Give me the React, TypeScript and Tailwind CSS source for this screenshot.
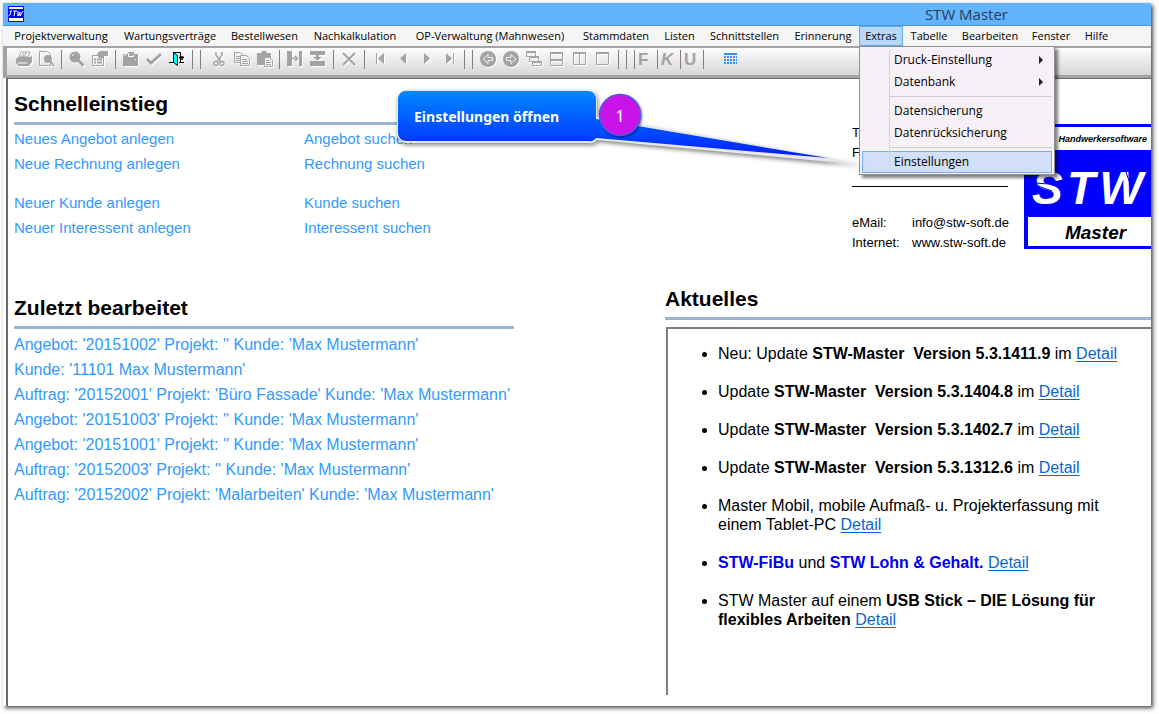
import type { ReactNode } from "react";

interface ToolGroup {
  className: string;
  tools: { label: string; icon: ReactNode }[];
}

const menuItems = [
  { label: "Projektverwaltung", width: "w-[110px]" },
  { label: "Wartungsverträge", width: "w-[108px]" },
  { label: "Bestellwesen", width: "w-[81px]" },
  { label: "Nachkalkulation", width: "w-[100px]" },
  { label: "OP-Verwaltung (Mahnwesen)", width: "w-[170px]" },
  { label: "Stammdaten", width: "w-[82px]" },
  { label: "Listen", width: "w-[45px]" },
  { label: "Schnittstellen", width: "w-[85px]" },
  { label: "Erinnerung", width: "w-[72px]" },
  { label: "Extras", width: "w-[44px]" },
  { label: "Tabelle", width: "w-[52px]" },
  { label: "Bearbeiten", width: "w-[70px]" },
  { label: "Fenster", width: "w-[52px]" },
  { label: "Hilfe", width: "w-[39px]" },
];

const recent = [
  "Angebot: '20151002' Projekt: '' Kunde: 'Max Mustermann'",
  "Kunde: '11101 Max Mustermann'",
  "Auftrag: '20152001' Projekt: 'Büro Fassade' Kunde: 'Max Mustermann'",
  "Angebot: '20151003' Projekt: '' Kunde: 'Max Mustermann'",
  "Angebot: '20151001' Projekt: '' Kunde: 'Max Mustermann'",
  "Auftrag: '20152003' Projekt: '' Kunde: 'Max Mustermann'",
  "Auftrag: '20152002' Projekt: 'Malarbeiten' Kunde: 'Max Mustermann'",
];

const quickLinks = [
  [
    ["Neues Angebot anlegen", "Angebot suchen"],
    ["Neue Rechnung anlegen", "Rechnung suchen"],
  ],
  [
    ["Neuer Kunde anlegen", "Kunde suchen"],
    ["Neuer Interessent anlegen", "Interessent suchen"],
  ],
];

const toolGroups: ToolGroup[] = [
  {
    className: "w-[51px] justify-center",
    tools: [
      {
        label: "Drucken",
        icon: (
          <>
            <path d="M5 1h9l-2 5H3z" fill="#fff" stroke="currentColor" />
            <path d="M6 3h5M5 5h5" stroke="currentColor" />
            <path d="M2 6h12l2-1v6l-3 4H3l-3-3V8z" fill="currentColor" />
            <path d="M2 12h9" stroke="#fff" />
          </>
        ),
      },
      {
        label: "Seitenansicht",
        icon: (
          <>
            <path d="M.5.5h8l3 3v11H.5z" fill="none" stroke="currentColor" />
            <circle cx="9" cy="8" r="4" fill="currentColor" />
            <path d="M11 10l4 5" stroke="currentColor" strokeWidth="2" />
          </>
        ),
      },
    ],
  },
  {
    className: "w-[54px] justify-center",
    tools: [
      {
        label: "Suchen",
        icon: (
          <>
            <circle cx="6" cy="6" r="5.5" fill="currentColor" />
            <path d="M3 5l2-2" stroke="#fff" />
            <path d="M9 9l5.500 5.500" stroke="currentColor" strokeWidth="3" />
          </>
        ),
      },
      {
        label: "Eigenschaften",
        icon: (
          <>
            <path d="M.5 4.500h11v10H.5z" fill="none" stroke="currentColor" />
            <path d="M5 3l3-3h8v5h-4l-2 3-4-2z" fill="currentColor" />
            <path d="M2 8.500h2M5 8.500h5M2 11.500h2M5 11.500h5" stroke="currentColor" strokeWidth="2" />
          </>
        ),
      },
    ],
  },
  {
    className: "w-[77px] justify-center",
    tools: [
      {
        label: "Speichern",
        icon: (
          <>
            <path d="M0 3h5V1h6v2h4v12H0z" fill="currentColor" />
            <path d="M5.500 2v3.500h5V4" fill="none" stroke="#fff" />
            <path d="M12.500 8v1M1 4h2" stroke="#fff" />
          </>
        ),
      },
      {
        label: "Übernehmen",
        icon: <path d="M1 8l4 4 10-9" fill="none" stroke="currentColor" strokeWidth="3" />,
      },
      {
        label: "Beenden",
        icon: (
          <>
            <path d="M4.500 11V1.500h7V11M0 11.500h4M10 11.500h5" fill="none" stroke="#000" />
            <path d="M4.500 1.500l4 3v10l-4-3z" fill="#00ffff" stroke="#000" />
            <path d="M10 6.500h5M13 5v4" stroke="#000" strokeWidth="1.500" />
          </>
        ),
      },
    ],
  },
  { className: "w-2", tools: [] },
  {
    className: "w-[79px] justify-center pl-1",
    tools: [
      {
        label: "Ausschneiden",
        icon: (
          <g fill="none" stroke="currentColor">
            <path d="M5 1v3l5 7M11 1v3l-5 7" strokeWidth="1.500" />
            <circle cx="5" cy="12.500" r="2" strokeWidth="1.500" />
            <circle cx="11" cy="12.500" r="2" strokeWidth="1.500" />
          </g>
        ),
      },
      {
        label: "Kopieren",
        icon: (
          <g fill="#f4f2f4" stroke="currentColor">
            <path d="M.5 1.500h6l3 3v7h-9z" />
            <path d="M2 5.500h4M2 7.500h4M2 9.500h4" />
            <path d="M6.500 4.500h6l3 3v7h-9z" />
            <path d="M8 8.500h5M8 10.500h6M8 12.500h6" />
          </g>
        ),
      },
      {
        label: "Einfügen",
        icon: (
          <>
            <path d="M0 2h4l1-2h4l1 2h4v12H0z" fill="currentColor" />
            <path d="M7.500 6.500h5l3 3v6h-8z" fill="#f4f2f4" stroke="currentColor" />
            <path d="M9 9.500h3M9 11.500h5M9 13.500h5" stroke="currentColor" />
          </>
        ),
      },
    ],
  },
  {
    className: "w-[54px] justify-center",
    tools: [
      {
        label: "Spalte einfügen",
        icon: (
          <>
            <path d="M0 0h5v15H0zM12 0h3v15h-3z" fill="currentColor" />
            <path d="M5 7.500h5M8 5l2.500 2.500L8 10" fill="none" stroke="currentColor" strokeWidth="1.500" />
          </>
        ),
      },
      {
        label: "Zeile einfügen",
        icon: (
          <path d="M0 0h15v4H9v2h3L7.500 9.500 3 6h3V4H0zM0 10h15v5H0z" fill="currentColor" />
        ),
      },
    ],
  },
  {
    className: "w-[31px] justify-center",
    tools: [
      {
        label: "Löschen",
        icon: <path d="M2 2l12 12M14 2L2 14" stroke="currentColor" strokeWidth="2" />,
      },
    ],
  },
  {
    className: "w-[100px] justify-center",
    tools: [
      { label: "Erster", icon: <path d="M4 2h1v11H4zM12 2v11L6 7.500z" fill="currentColor" /> },
      { label: "Vorheriger", icon: <path d="M11 2v11L5 7.500z" fill="currentColor" /> },
      { label: "Nächster", icon: <path d="M6 2v11l6-5.500z" fill="currentColor" /> },
      { label: "Letzter", icon: <path d="M12 2h1v11h-1zM5 2v11l6-5.500z" fill="currentColor" /> },
    ],
  },
  { className: "w-2", tools: [] },
  {
    className: "w-[146px] justify-center",
    tools: [
      {
        label: "Zurück",
        icon: (
          <>
            <circle cx="8" cy="8" r="8" fill="currentColor" />
            <path
              d="M3 8l5-4.500v3h4.500v3H8v3z"
              fill="currentColor"
              stroke="#f4f2f4"
              strokeWidth="1"
            />
          </>
        ),
      },
      {
        label: "Vor",
        icon: (
          <>
            <circle cx="8" cy="8" r="8" fill="currentColor" />
            <path
              d="M13 8L8 3.500v3H3.500v3H8v3z"
              fill="currentColor"
              stroke="#f4f2f4"
              strokeWidth="1"
            />
          </>
        ),
      },
      {
        label: "Überlappend",
        icon: (
          <g fill="#f4f2f4" stroke="currentColor">
            <path d="M.5 1.500h9v4h-9z" />
            <path d="M0 1h10" strokeWidth="2" />
            <path d="M3.500 6.500h9v4h-9z" />
            <path d="M3 6h10" strokeWidth="2" />
            <path d="M6.500 11.500h9v3h-9z" />
            <path d="M6 11h10" strokeWidth="2" />
          </g>
        ),
      },
      {
        label: "Untereinander",
        icon: (
          <g fill="none" stroke="currentColor">
            <path d="M1.500 1.500h12v13h-12z" />
            <path d="M1 2h13M1 9h13" strokeWidth="2" />
          </g>
        ),
      },
      {
        label: "Nebeneinander",
        icon: (
          <g fill="none" stroke="currentColor">
            <path d="M1.500 1.500h12v12h-12zM7.500 2v12" />
            <path d="M1 2h13" strokeWidth="2" />
          </g>
        ),
      },
      {
        label: "Vollbild",
        icon: (
          <g fill="none" stroke="currentColor">
            <path d="M1.500 1.500h12v12h-12z" />
            <path d="M1 2h13" strokeWidth="2" />
          </g>
        ),
      },
    ],
  },
  { className: "w-2", tools: [] },
  { className: "w-2", tools: [] },
];

function Toolbar() {
  return (
    <div className="flex h-[32px] items-start border-t-2 border-b-[3px] border-l-[4px] border-[#a5a3a5] bg-linear-to-b from-[#fefdfe] to-[#d8d6d8] pt-[2px] pl-1 text-[#a5a2a5]">
      {toolGroups.map((group, i) => (
        <div
          key={i}
          className={`flex h-[19px] shrink-0 items-center border-r border-[#807e80] ${group.className}`}
        >
          {group.tools.map((tool) => (
            <button
              key={tool.label}
              aria-label={tool.label}
              className="flex w-[23px] shrink-0 items-center justify-center"
            >
              <svg
                width="17"
                height="17"
                viewBox="0 0 17 17"
                className="drop-shadow-[1px_1px_0_#fff]"
              >
                {tool.icon}
              </svg>
            </button>
          ))}
        </div>
      ))}
      {/* Text format */}
      <div className="flex h-[19px] font-['Liberation_Sans'] text-[17px] leading-[17px] font-bold">
        <button aria-label="Fett" className="w-[23px] border-r border-[#807e80] pl-[3px] text-left">
          F
        </button>
        <button aria-label="Kursiv" className="w-[23px] border-r border-[#807e80] pl-[3px] text-left italic">
          K
        </button>
        <button aria-label="Unterstrichen" className="w-[23px] border-r border-[#807e80] pl-[3px] text-left">
          U
        </button>
      </div>
      <button aria-label="Tabelle" className="ml-5 pt-[3px]">
        <svg width="14" height="14" viewBox="0 0 14 14">
          <path d="M0 0h13v2H0z" fill="#3b8cf5" />
          <path
            d="M0 4h13M0 7h13M0 10h13"
            stroke="#3b8cf5"
            strokeWidth="2"
            strokeDasharray="2 1"
          />
        </svg>
      </button>
    </div>
  );
}

function DropdownItem({ label, submenu }: { label: string; submenu?: boolean }) {
  return (
    <button className="flex h-[22px] w-full items-center justify-between pr-[9px] pl-8 text-left">
      {label}
      {submenu && (
        <svg width="4" height="8" viewBox="0 0 4 8">
          <path d="M0 0l4 4-4 4z" fill="#222" />
        </svg>
      )}
    </button>
  );
}

function ExtrasMenu() {
  return (
    <div className="absolute top-full left-0 z-20 w-[196px] border border-[#8f8f8f] bg-[#f6f1f6] p-[2px] pb-px text-[12px] shadow-[3px_3px_3px_rgba(0,0,0,0.5)]">
      <div className="absolute top-[3px] bottom-[3px] left-[29px] w-px bg-[#d5d3d5]" />
      <DropdownItem label="Druck-Einstellung" submenu />
      <DropdownItem label="Datenbank" submenu />
      <hr className="my-[3px] ml-[28px] border-[#d0ced0]" />
      <DropdownItem label="Datensicherung" />
      <DropdownItem label="Datenrücksicherung" />
      <hr className="my-[3px] ml-[28px] border-[#d0ced0]" />
      <div className="bg-[#66aaff]/25 outline outline-[#78aee5] -outline-offset-1">
        <DropdownItem label="Einstellungen" />
      </div>
    </div>
  );
}

function MenuBar() {
  return (
    <nav className="flex h-[20px] bg-[#f5f5f5] pl-[3px] font-['Open_Sans',sans-serif] text-[11px] text-black">
      {menuItems.map((item) => {
        const open = item.label === "Extras";
        return (
          <div
            key={item.label}
            className={`relative shrink-0 ${item.width} ${
              open ? "bg-[#b8d8fb] outline outline-[#66a7e8] -outline-offset-1" : ""
            }`}
          >
            <button className="flex h-full w-full items-center justify-center whitespace-nowrap">
              {item.label}
            </button>
            {open && <ExtrasMenu />}
          </div>
        );
      })}
    </nav>
  );
}

function Heading({ children }: { children: ReactNode }) {
  return (
    <h2 className="border-b-[3px] border-[#9ab4d6] pb-[6px] text-[21px] leading-[24px] font-bold">
      {children}
    </h2>
  );
}

function Logo() {
  return (
    <div className="mt-[45px] w-[127px] shrink-0 self-start border-y-[3px] border-l-4 border-[#0000ff] bg-white font-bold italic">
      <div className="-ml-1 h-[23px] pr-1 text-right text-[9px] leading-[24px]">
        Handwerkersoftware
      </div>
      <div className="relative flex h-[67px] items-center justify-between bg-[#0000ff] pt-2 pr-2 pl-1 text-[46px] leading-[46px] text-white">
        <span>S</span>
        <span>T</span>
        <span>W</span>
        {/* Ribbon folds */}
        <svg
          className="absolute inset-0"
          width="123"
          height="67"
          viewBox="0 0 123 67"
          fill="none"
          stroke="#0000ff"
        >
          <path d="M7 33l14 1M10 36l14 5M83 22l4 12M98 22l4 12" />
        </svg>
      </div>
      <div className="h-[29px] pl-3 text-center text-[19px] leading-[32px]">Master</div>
    </div>
  );
}

function Detail() {
  return (
    <a href="#detail" className="text-[#0a66d0] underline underline-offset-2">
      Detail
    </a>
  );
}

function Update({ prefix, version }: { prefix: string; version: string }) {
  return (
    <li>
      {prefix} <b>STW-Master&nbsp; Version {version}</b> im <Detail />
    </li>
  );
}

function Callout() {
  return (
    <div className="pointer-events-none absolute top-[86px] left-[392px] z-30 h-[92px] w-[490px]">
      <svg width="490" height="92" viewBox="0 0 490 92">
        <defs>
          <linearGradient id="box" x1="0" y1="5" x2="0" y2="72" gradientUnits="userSpaceOnUse">
            <stop offset="0" stopColor="#0088ff" />
            <stop offset="0.7" stopColor="#0040ff" />
            <stop offset="1" stopColor="#0018ff" />
          </linearGradient>
          <linearGradient id="edge" x1="430" y1="0" x2="482" y2="0" gradientUnits="userSpaceOnUse">
            <stop offset="0" stopColor="#e8e8ea" />
            <stop offset="1" stopColor="#e8e8ea" stopOpacity="0" />
          </linearGradient>
        </defs>
        <g className="drop-shadow-[1px_2px_2px_rgba(0,0,0,0.5)]">
          <path
            d="M14 4h182a9 9 0 0 1 9 9v18l277 49L205 54a9 9 0 0 1-9 3H14a9 9 0 0 1-9-9V13a9 9 0 0 1 9-9z"
            fill="url(#edge)"
          />
        </g>
        <path
          d="M14 5h182a8 8 0 0 1 8 8v20l232 39L204 52a8 8 0 0 1-8 3H14a8 8 0 0 1-8-8V13a8 8 0 0 1 8-8z"
          fill="url(#box)"
        />
        <g className="drop-shadow-[1px_1px_1px_rgba(0,0,0,0.5)]">
          <circle cx="228" cy="29" r="20.500" fill="#c913e8" stroke="#4a5be0" strokeWidth="1.500" />
        </g>
      </svg>
      <div className="absolute top-[5px] left-[6px] flex h-[50px] w-[242px] items-center font-['Noto_Sans',sans-serif] text-white">
        <span className="w-[202px] pl-4 text-[14px] font-bold">Einstellungen öffnen</span>
        <span className="w-10 text-center text-[16px]">1</span>
      </div>
    </div>
  );
}

export default function App() {
  return (
    <div className="relative flex min-h-screen flex-col bg-[#fdfdfd] pt-[3px] pr-2 pb-2 pl-[3px] font-['Liberation_Sans',sans-serif] text-black">
      <div className="flex flex-1 flex-col bg-white shadow-[2px_2px_4px_rgba(0,0,0,0.7)]">
        {/* Title bar */}
        <header className="flex h-[23px] items-center border-b border-[#4a99e6] bg-[#63b3ff] pl-[5px]">
          <svg width="16" height="16" viewBox="0 0 16 16">
            <path d="M0 0h16v16H0z" fill="#0000ff" />
            <path d="M1 1h14v2H1zM1 12h14v3H1z" fill="#fff" />
            <path
              d="M4 5H2l1 2-2 3M5 5h4M7 5l-1 5M10 5v5l2-4v4l3-5"
              fill="none"
              stroke="#fff"
            />
          </svg>
          <h1 className="flex-1 pr-[143px] text-right font-['Open_Sans',sans-serif] text-[15px] leading-[22px] text-[#263f58]">
            STW Master
          </h1>
        </header>
        <MenuBar />
        <Toolbar />

        {/* Workspace */}
        <main className="ml-[3px] flex flex-1 border-t border-l-2 border-[#696969] pl-[6px]">
          <div className="w-[500px] shrink-0 pt-[13px]">
            <section className="h-[204px]">
              <Heading>Schnelleinstieg</Heading>
              <div className="flex flex-col gap-[14px] pt-px text-[15px] leading-[25px] text-[#3399ff]">
                {quickLinks.map((group, i) => (
                  <div key={i} className="grid grid-cols-[290px_1fr]">
                    {group.flat().map((label) => (
                      <a key={label} href="#start">
                        {label}
                      </a>
                    ))}
                  </div>
                ))}
              </div>
            </section>
            <section>
              <Heading>Zuletzt bearbeitet</Heading>
              <ul className="overflow-hidden pt-[3px] text-[16px] leading-[25px] whitespace-nowrap text-[#3399ff]">
                {recent.map((entry) => (
                  <li key={entry}>
                    <a href="#recent">{entry}</a>
                  </li>
                ))}
              </ul>
            </section>
          </div>

          <div className="ml-[151px] flex min-w-0 flex-1 flex-col pb-[11px]">
            {/* Contact */}
            <div className="flex h-[208px] justify-end gap-4">
              <div className="pt-[44px] text-[13px] leading-[20px] whitespace-nowrap">
                <div className="border-b border-black pb-[23px]">
                  <p>Telefon:</p>
                  <p>Fax:</p>
                </div>
                <dl className="grid grid-cols-[60px_96px] pt-[26px]">
                  <dt>eMail:</dt>
                  <dd>info@stw-soft.de</dd>
                  <dt>Internet:</dt>
                  <dd>www.stw-soft.de</dd>
                </dl>
              </div>
              <Logo />
            </div>
            <Heading>Aktuelles</Heading>
            <div className="mt-[7px] ml-px flex-1 border-t-2 border-l-2 border-[#7d7d7d] pt-[15px] pl-[50px]">
              <ul className="flex w-[400px] list-disc flex-col gap-[19px] text-[16px] leading-[19px]">
                <Update prefix="Neu: Update" version="5.3.1411.9" />
                <Update prefix="Update" version="5.3.1404.8" />
                <Update prefix="Update" version="5.3.1402.7" />
                <Update prefix="Update" version="5.3.1312.6" />
                <li>
                  Master Mobil, mobile Aufmaß- u. Projekterfassung mit einem Tablet-PC <Detail />
                </li>
                <li>
                  <b className="text-[#0000f0]">STW-FiBu</b> und{" "}
                  <b className="text-[#0000f0]">STW Lohn &amp; Gehalt.</b> <Detail />
                </li>
                <li>
                  STW Master auf einem <b>USB Stick – DIE Lösung für flexibles Arbeiten</b>{" "}
                  <Detail />
                </li>
              </ul>
            </div>
          </div>
        </main>
      </div>
      <Callout />
    </div>
  );
}
